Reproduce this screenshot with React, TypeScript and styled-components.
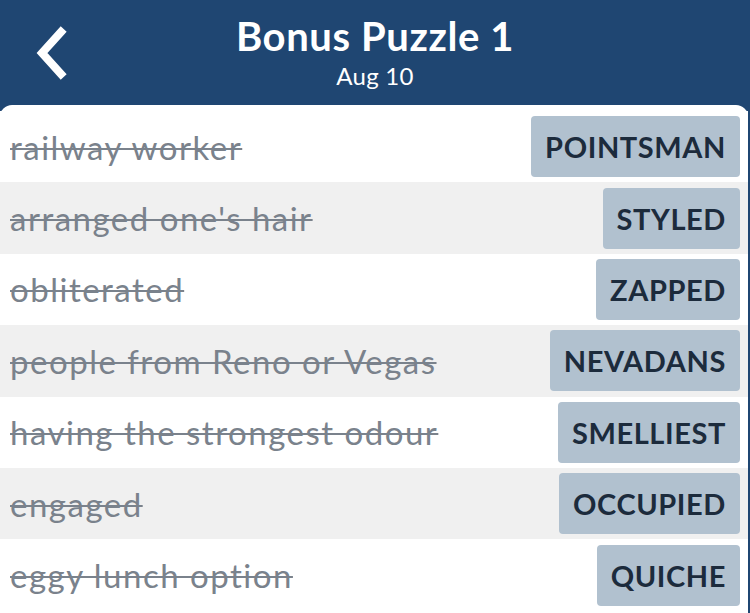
import React from "react";
import styled, { createGlobalStyle } from "styled-components";

const Global = createGlobalStyle`
  html, body { margin: 0; padding: 0; background: #1f4672; }
  body { font-family: Lato, "Open Sans", sans-serif; }
`;

const Page = styled.div`
  width: 750px;
  height: 613px;
  overflow: hidden;
  background: #1f4672;
  display: flex;
  flex-direction: column;
`;

const Header = styled.header`
  height: 105px;
  flex: none;
  position: relative;
  display: flex;
  flex-direction: column;
  align-items: center;
  color: #fff;
`;

const Title = styled.h1`
  margin: 13px 0 0;
  font-size: 40px;
  font-weight: 700;
  line-height: 46px;
  letter-spacing: 0.6px;
`;

const Subtitle = styled.div`
  margin-top: 3px;
  font-size: 24px;
  line-height: 28px;
  letter-spacing: 0.3px;
`;

const BackButton = styled.button`
  position: absolute;
  left: 30px;
  top: 22px;
  width: 44px;
  height: 62px;
  padding: 0;
  border: 0;
  background: none;
  display: flex;
  align-items: center;
  justify-content: center;
`;

const Card = styled.main`
  flex: 1;
  margin-right: 2px;
  background: #fff;
  border-radius: 12px 12px 0 0;
  padding-top: 6px;
`;

const Row = styled.div<{ $shaded: boolean }>`
  height: 71.4px;
  box-sizing: border-box;
  display: flex;
  align-items: center;
  justify-content: space-between;
  padding: 0 8px 0 10px;
  background: ${(p) => (p.$shaded ? "#f0f0f0" : "#fff")};
`;

const Clue = styled.span`
  font-size: 33px;
  letter-spacing: 1.5px;
  color: #7a828c;
  text-decoration: line-through;
  text-decoration-thickness: 2px;
  white-space: nowrap;
`;

const Answer = styled.span`
  height: 61px;
  box-sizing: border-box;
  display: flex;
  align-items: center;
  padding: 0 14px;
  background: #b1c1cf;
  border-radius: 4px;
  color: #1c2b3c;
  font-size: 29px;
  font-weight: 700;
  letter-spacing: 0.6px;
`;

const rows = [
  ["railway worker", "POINTSMAN"],
  ["arranged one's hair", "STYLED"],
  ["obliterated", "ZAPPED"],
  ["people from Reno or Vegas", "NEVADANS"],
  ["having the strongest odour", "SMELLIEST"],
  ["engaged", "OCCUPIED"],
  ["eggy lunch option", "QUICHE"],
];

export default function App() {
  return (
    <Page>
      <Global />
      <Header>
        <BackButton aria-label="Back">
          <svg width="44" height="62" viewBox="0 0 44 62">
            <polyline
              points="31,10 12,31 31,52"
              fill="none"
              stroke="#fff"
              strokeWidth="8"
              strokeLinecap="square"
              strokeLinejoin="miter"
            />
          </svg>
        </BackButton>
        <Title>Bonus Puzzle 1</Title>
        <Subtitle>Aug 10</Subtitle>
      </Header>
      <Card>
        {rows.map(([clue, answer], i) => (
          <Row key={answer} $shaded={i % 2 === 1}>
            <Clue>{clue}</Clue>
            <Answer>{answer}</Answer>
          </Row>
        ))}
      </Card>
    </Page>
  );
}
